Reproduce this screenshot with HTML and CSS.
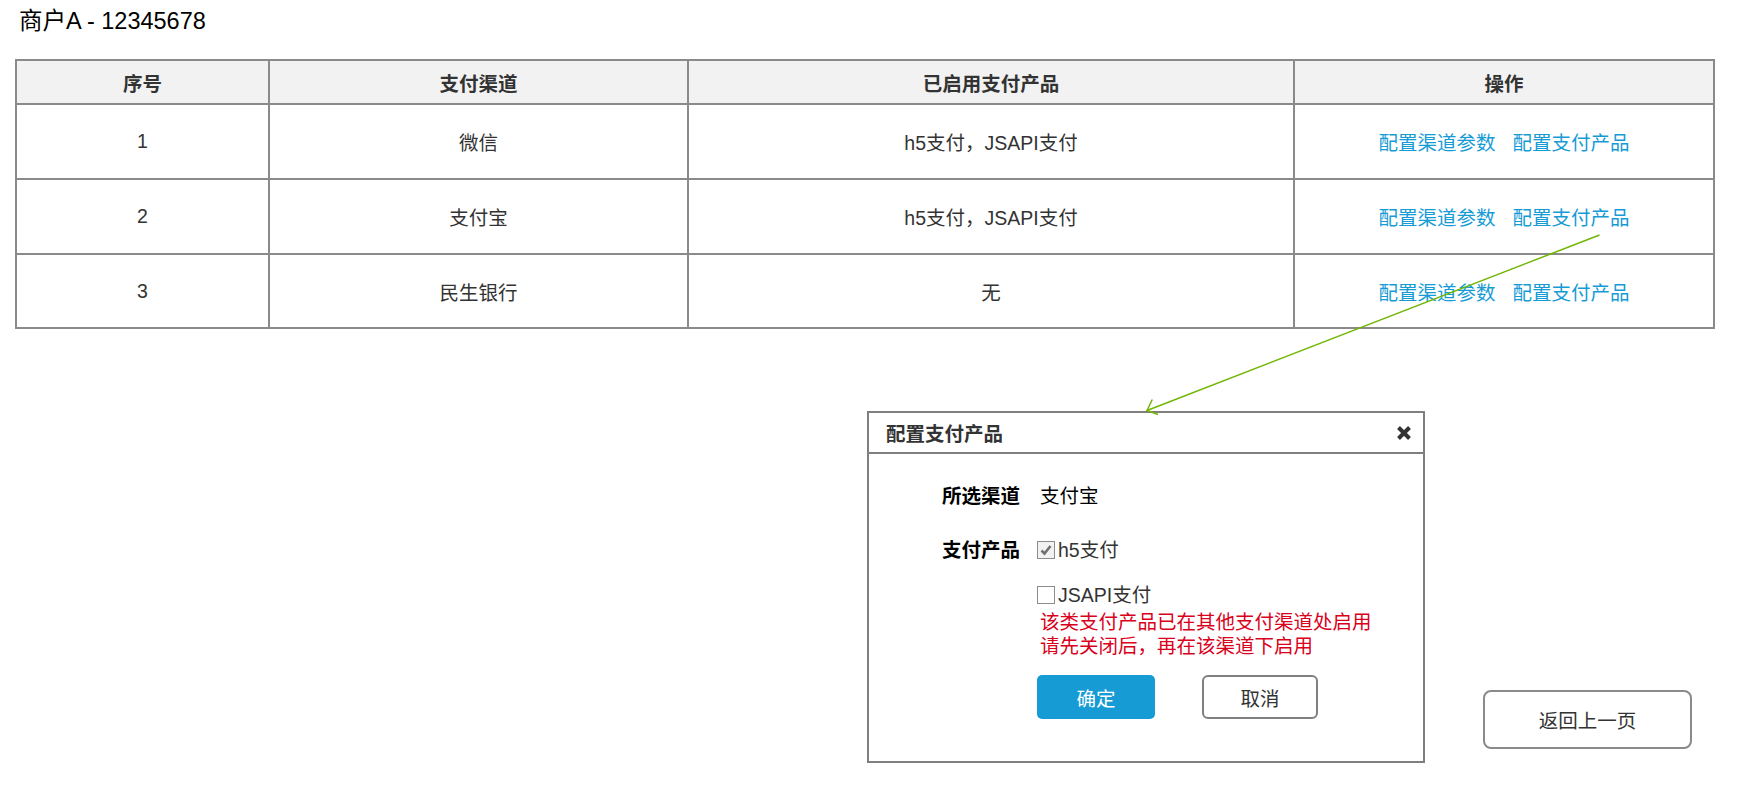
FILE: index.html
```html
<!DOCTYPE html>
<html lang="zh-CN">
<head>
<meta charset="UTF-8">
<link rel="stylesheet" href="styles.css">
</head>
<body>
<div class="page">
  <h1 class="merchant">商户A - 12345678</h1>

  <table class="channels">
    <thead>
      <tr>
        <th class="col-no">序号</th>
        <th class="col-channel">支付渠道</th>
        <th class="col-products">已启用支付产品</th>
        <th class="col-ops">操作</th>
      </tr>
    </thead>
    <tbody>
      <tr>
        <td>1</td>
        <td>微信</td>
        <td>h5支付，JSAPI支付</td>
        <td><div class="ops"><a href="#">配置渠道参数</a><a href="#">配置支付产品</a></div></td>
      </tr>
      <tr>
        <td>2</td>
        <td>支付宝</td>
        <td>h5支付，JSAPI支付</td>
        <td><div class="ops"><a href="#">配置渠道参数</a><a href="#">配置支付产品</a></div></td>
      </tr>
      <tr class="last">
        <td>3</td>
        <td>民生银行</td>
        <td>无</td>
        <td><div class="ops"><a href="#">配置渠道参数</a><a href="#">配置支付产品</a></div></td>
      </tr>
    </tbody>
  </table>

  <div class="lower">
    <div class="dialog">
      <div class="dialog-head">
        <span class="dialog-title">配置支付产品</span>
        <svg class="close" width="16" height="16" viewBox="0 0 16 16">
          <path d="M2.5 2.5 L13.5 13.5 M13.5 2.5 L2.5 13.5" stroke="#333" stroke-width="4" stroke-linecap="butt"/>
        </svg>
      </div>
      <div class="dialog-body">
        <div class="field">
          <div class="field-label">所选渠道</div>
          <div class="field-value">支付宝</div>
        </div>
        <div class="field field-products">
          <div class="field-label">支付产品</div>
          <div class="options">
            <label class="option">
              <span class="check checked">
                <svg width="14" height="14" viewBox="0 0 14 14"><path d="M2.5 7.5 L5.5 10.5 L11.5 3" fill="none" stroke="#707070" stroke-width="2.6"/></svg>
              </span>h5支付
            </label>
            <label class="option option-second">
              <span class="check"></span>JSAPI支付
            </label>
            <div class="note">该类支付产品已在其他支付渠道处启用<br>请先关闭后，再在该渠道下启用</div>
            <div class="actions">
              <button class="btn btn-primary">确定</button>
              <button class="btn btn-plain">取消</button>
            </div>
          </div>
        </div>
      </div>
    </div>
    <button class="back">返回上一页</button>
  </div>

  <svg class="connector" width="1745" height="786" viewBox="0 0 1745 786">
    <line x1="1599.5" y1="235" x2="1147" y2="410.5" stroke="#70b603" stroke-width="1.5"/>
    <polyline points="1152.3,399.5 1147,410.5 1158,414.5" fill="none" stroke="#70b603" stroke-width="1.5"/>
  </svg>
</div>
</body>
</html>
```

FILE: styles.css
```css
body {
  margin: 0;
  background: #fff;
  font-family: "Liberation Sans", "Noto Sans CJK SC", sans-serif;
  font-size: 19.5px;
  color: #333;
}

.page {
  position: relative;
  width: 1745px;
  height: 786px;
  overflow: hidden;
}

.merchant {
  margin: 0;
  padding: 6px 0 0 19px;
  font-size: 23.5px;
  line-height: 30px;
  font-weight: normal;
  color: #000;
}

/* channel table */
.channels {
  margin: 23px 0 0 15px;
  width: 1700px;
  table-layout: fixed;
  border-collapse: separate;
  border-spacing: 0;
  border-top: 2px solid #8a8a8a;
  border-left: 2px solid #8a8a8a;
}

.channels th,
.channels td {
  box-sizing: border-box;
  padding: 0;
  border-right: 2px solid #8a8a8a;
  border-bottom: 2px solid #8a8a8a;
  text-align: center;
  vertical-align: middle;
}

.channels th {
  height: 44px;
  background: #f2f2f2;
  font-weight: bold;
  color: #333;
}

.channels td {
  height: 75px;
}

.channels tr.last td {
  height: 74px;
}

.col-no { width: 253px; }
.col-channel { width: 419px; }
.col-products { width: 606px; }
.col-ops { width: 420px; }

.ops {
  display: flex;
  justify-content: center;
  gap: 17px;
}

.ops a {
  color: #169bd5;
  text-decoration: none;
}

/* dialog + back button */
.lower {
  display: flex;
  align-items: flex-end;
  margin-top: 82px;
  padding-left: 867px;
}

.dialog {
  box-sizing: border-box;
  width: 558px;
  border: 2px solid #7f7f7f;
  background: #fff;
}

.dialog-head {
  display: flex;
  align-items: center;
  justify-content: space-between;
  height: 39px;
  padding: 0 11px 0 17px;
  border-bottom: 2px solid #7f7f7f;
}

.dialog-title {
  font-weight: bold;
  color: #333;
}

.dialog-body {
  padding: 27px 0 42px 73px;
}

.field {
  display: flex;
  line-height: 30px;
}

.field-label {
  width: 76px;
  margin-right: 22px;
  font-weight: bold;
  color: #000;
  white-space: nowrap;
}

.field-value {
  color: #000;
}

.field-products {
  margin-top: 24px;
}

.options {
  display: flex;
  flex-direction: column;
  align-items: flex-start;
}

.option {
  display: flex;
  align-items: center;
  margin-left: -3px;
  line-height: 30px;
  color: #333;
}

.option-second {
  margin-top: 14.5px;
}

.check {
  box-sizing: border-box;
  display: flex;
  align-items: center;
  justify-content: center;
  width: 18px;
  height: 18px;
  margin-right: 3px;
  border: 1.5px solid #8c8c8c;
  background: #fff;
}

.check.checked {
  background: #f2f2f2;
}

.note {
  margin-top: 0.5px;
  line-height: 24px;
  color: #d9001b;
  white-space: nowrap;
}

.actions {
  display: flex;
  gap: 47px;
  margin: 17px 0 0 -3px;
}

.btn {
  box-sizing: border-box;
  height: 44px;
  font-family: inherit;
  font-size: 19.5px;
  cursor: pointer;
}

.btn-primary {
  width: 118px;
  border: none;
  border-radius: 5px;
  background: #169bd5;
  color: #fff;
}

.btn-plain {
  width: 116px;
  border: 2px solid #7f7f7f;
  border-radius: 6px;
  background: #fff;
  color: #333;
}

.back {
  box-sizing: border-box;
  width: 209px;
  height: 59px;
  margin: 0 0 14px 58px;
  border: 2px solid #8a8a8a;
  border-radius: 8px;
  background: #fff;
  font-family: inherit;
  font-size: 19.5px;
  color: #333;
}

.connector {
  position: absolute;
  left: 0;
  top: 0;
  pointer-events: none;
}
```
